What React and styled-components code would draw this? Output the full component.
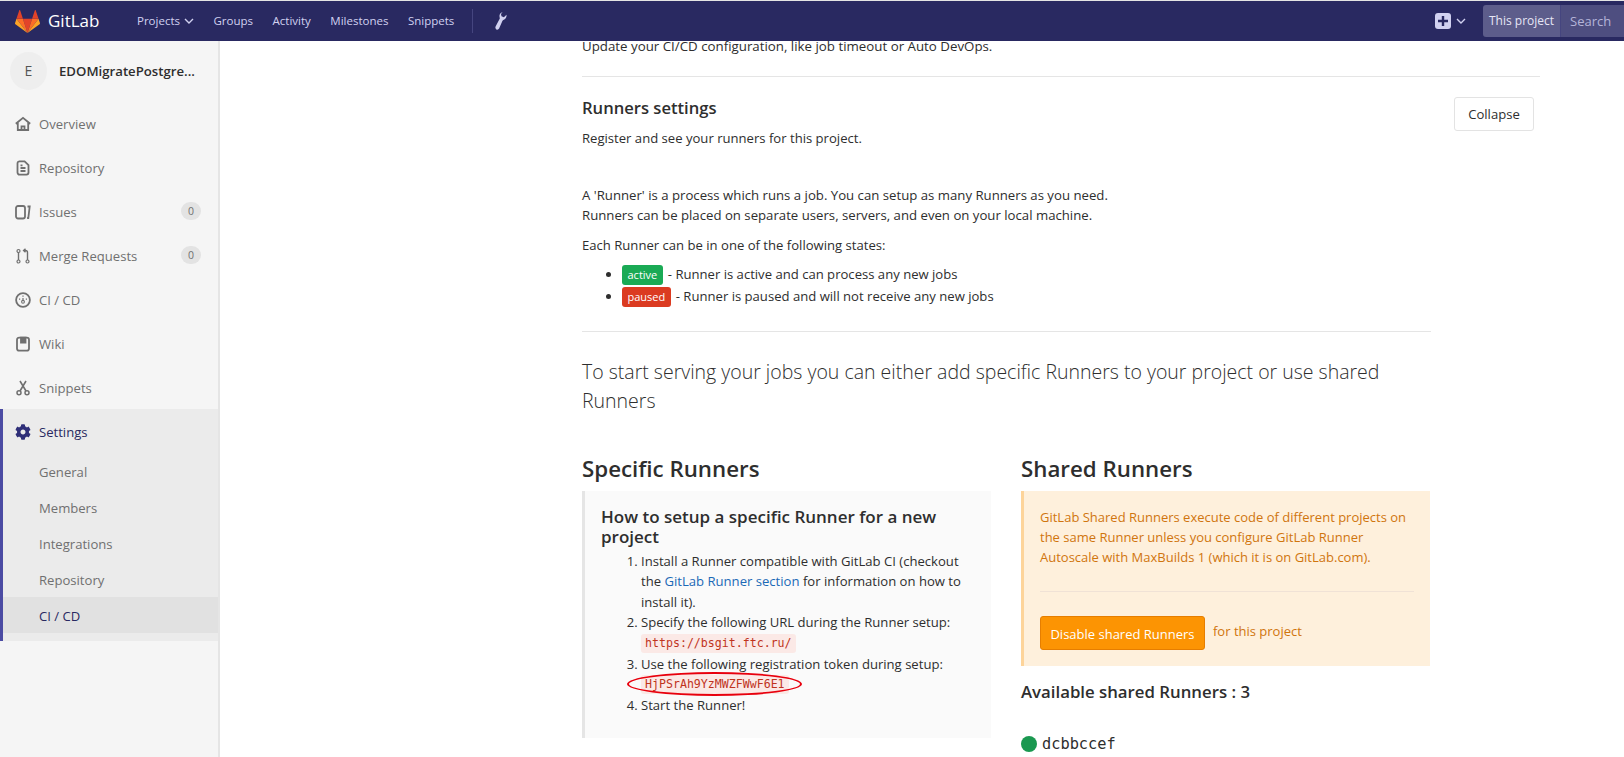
import React from "react";
import styled, { createGlobalStyle } from "styled-components";
import { FaCog } from "react-icons/fa";

const GlobalStyle = createGlobalStyle`
  html, body {
    margin: 0;
    height: 100%;
    overflow: hidden;
    background: #fff;
  }
  body {
    font-family: "Open Sans", "Noto Sans", sans-serif;
    font-size: 13.1px;
    line-height: 20px;
    color: #2e2e2e;
  }
  * { box-sizing: border-box; }
`;

const Page = styled.div`
  height: 757px;
  display: flex;
  flex-direction: column;
  border-top: 1px solid #e4e4e4;
  overflow: hidden;
`;

const TopBar = styled.header`
  height: 40px;
  flex: none;
  background: #292961;
  display: flex;
  align-items: center;
  padding-left: 15px;
  color: #d1d1f0;
  font-size: 11.5px;
  position: relative;
  z-index: 2;
`;

const Brand = styled.div`
  display: flex;
  align-items: center;
  gap: 8px;
  width: 122px;
  color: #fff;
  font-size: 17px;
  svg { flex: none; }
`;

const NavLinks = styled.nav`
  display: flex;
  align-items: center;
  gap: 19.5px;
`;

const NavLink = styled.span`
  display: inline-flex;
  align-items: center;
  gap: 4px;
`;

const NavDivider = styled.span`
  width: 1px;
  height: 24px;
  background: #45457f;
  margin-left: 18px;
`;

const WrenchWrap = styled.span`
  display: inline-flex;
  margin-left: 21px;
  color: #d1d1f0;
`;

const TopRight = styled.div`
  margin-left: auto;
  display: flex;
  align-items: center;
`;

const PlusBox = styled.span`
  width: 16px;
  height: 16px;
  border-radius: 3px;
  background: #d1d1f0;
  display: flex;
  align-items: center;
  justify-content: center;
  margin-right: 5px;
`;

const SearchChip = styled.div`
  height: 32px;
  width: 78px;
  margin-left: 17px;
  background: #5d5d8b;
  border-radius: 3px 0 0 3px;
  color: #e6e6f5;
  font-size: 12px;
  display: flex;
  align-items: center;
  justify-content: center;
  border-right: 1px solid #45457f;
`;

const SearchField = styled.div`
  height: 32px;
  width: 63px;
  background: #4e4e80;
  color: #b4b4d8;
  display: flex;
  align-items: center;
  padding-left: 9px;
  font-size: 13px;
`;

const Body = styled.div`
  flex: 1;
  display: flex;
  min-height: 0;
`;

const Sidebar = styled.aside`
  width: 220px;
  flex: none;
  background: #f5f5f5;
  border-right: 2px solid #e5e5e5;
  color: #707070;
`;

const ProjectHead = styled.div`
  height: 60px;
  display: flex;
  align-items: center;
  padding: 0 0 0 10px;
  gap: 12px;
  color: #2e2e2e;
  font-weight: 600;
  font-size: 13.2px;
`;

const Avatar = styled.div`
  width: 37px;
  height: 38px;
  border-radius: 50%;
  background: #eeeeee;
  color: #555;
  font-size: 14px;
  font-weight: 400;
  display: flex;
  align-items: center;
  justify-content: center;
`;

const MenuItem = styled.div`
  height: 44px;
  display: flex;
  align-items: center;
  padding: 2px 17px 0 15px;
  gap: 8px;
  color: ${(p) => (p.$active ? "#292961" : "#707070")};
  font-weight: ${(p) => (p.$active ? 500 : 400)};
  svg { flex: none; }
`;

const Badge = styled.span`
  margin-left: auto;
  margin-top: -3px;
  width: 20px;
  height: 18px;
  border-radius: 9px;
  background: #e3e3e3;
  color: #707070;
  font-size: 10.5px;
  display: flex;
  align-items: center;
  justify-content: center;
`;

const SettingsGroup = styled.div`
  background: #ebebeb;
  border-left: 3px solid #4b4ba3;
  padding-bottom: 8px;
  ${MenuItem} { padding-left: 12px; }
`;

const SubItem = styled.div`
  height: 36px;
  display: flex;
  align-items: center;
  padding: 2px 0 0 36px;
  background: ${(p) => (p.$active ? "#e1e1e1" : "transparent")};
  color: ${(p) => (p.$active ? "#292961" : "#707070")};
  font-weight: ${(p) => (p.$active ? 500 : 400)};
`;

const Main = styled.main`
  flex: 1;
  min-width: 0;
  overflow: hidden;
  padding-left: 362px;
`;

const Column = styled.div`
  width: 958px;
`;

const ClippedLead = styled.p`
  margin: -5px 0 0;
  padding-bottom: 20px;
  border-bottom: 1px solid #e5e5e5;
  font-size: 13.3px;
`;

const SectionHead = styled.div`
  display: flex;
  justify-content: space-between;
  align-items: flex-start;
  padding: 20px 6px 0 0;
`;

const SectionTitle = styled.h4`
  margin: 1px 0 10px;
  font-size: 16.6px;
  line-height: 20px;
  font-weight: 600;
`;

const Text = styled.p`
  margin: 0;
`;

const CollapseButton = styled.button`
  width: 80px;
  height: 34px;
  background: #fff;
  border: 1px solid #e3e3e3;
  border-radius: 3px;
  color: #2e2e2e;
  font: inherit;
  padding: 0;
`;

const Inner = styled.div`
  width: 849px;
`;

const Intro = styled.p`
  margin: 37px 0 10px;
  font-size: 13.2px;
`;

const StateList = styled.ul`
  margin: 9px 0 0;
  padding-left: 40px;
  li { height: 22px; }
`;

const StateLabel = styled.span`
  display: inline-block;
  height: 20px;
  line-height: 20px;
  padding: 0 5.5px;
  border-radius: 3px;
  color: #fff;
  font-size: 11px;
  margin-right: 5px;
  background: ${(p) => (p.$kind === "active" ? "#1aaa55" : "#db3b21")};
`;

const Divider = styled.hr`
  border: 0;
  border-top: 1px solid #e5e5e5;
  margin: 23px 0 0;
`;

const Lead = styled.h4`
  margin: 25px 0 0;
  font-size: 19.5px;
  line-height: 29px;
  font-weight: 300;
`;

const Columns = styled.div`
  display: grid;
  grid-template-columns: 409px 409px;
  column-gap: 30px;
  margin-top: 39px;
`;

const ColumnTitle = styled.h3`
  margin: 0 0 7px;
  font-size: 22.3px;
  line-height: 30px;
  font-weight: 600;
`;

const HelpPanel = styled.div`
  height: 247px;
  background: #fafafa;
  border-left: 3px solid #e5e5e5;
  padding: 16px 16px;
`;

const HelpTitle = styled.h5`
  margin: 0;
  font-size: 17px;
  line-height: 20px;
  font-weight: 600;
`;

const Steps = styled.ol`
  margin: 4px 0 0;
  padding-left: 40px;
  li { line-height: 20.4px; }
`;

const Link = styled.span`
  color: #1b69b6;
`;

const TokenRow = styled.div`
  height: 21px;
  display: flex;
  align-items: center;
`;

const Code = styled.code`
  position: relative;
  display: inline-block;
  font-family: "DejaVu Sans Mono", monospace;
  font-size: 11.6px;
  line-height: 19px;
  padding: 0 4px;
  border-radius: 3px;
  background: #fbe9e6;
  color: #c0341d;
`;

const RedEllipse = styled.span`
  position: absolute;
  left: -14px;
  top: -3px;
  width: 175px;
  height: 24px;
  border: 2px solid #e8000d;
  border-radius: 50%;
`;

const NoticePanel = styled.div`
  background: #fef0dc;
  border-left: 3px solid #fdd49a;
  padding: 16px 16px 16px;
  color: #d0750e;
  font-size: 13px;
`;

const NoticeRule = styled.hr`
  border: 0;
  border-top: 1px solid #f0e2d6;
  margin: 24px 0 24px;
`;

const NoticeActions = styled.div`
  display: flex;
  align-items: flex-start;
  gap: 8px;
`;

const OrangeButton = styled.button`
  width: 165px;
  height: 34px;
  background: #fc9403;
  border: 1px solid #e67e00;
  border-radius: 3px;
  color: #fff;
  font: inherit;
  padding: 1px 0 0;
`;

const ForProject = styled.span`
  line-height: 30px;
`;

const AvailableTitle = styled.h4`
  margin: 16px 0 0;
  font-size: 16.8px;
  line-height: 20px;
  font-weight: 600;
`;

const RunnerRow = styled.div`
  display: flex;
  align-items: center;
  gap: 5px;
  margin-top: 32px;
  font-family: "DejaVu Sans Mono", monospace;
  font-size: 15.3px;
`;

const StatusDot = styled.span`
  width: 16px;
  height: 16px;
  border-radius: 50%;
  background: #1a9850;
`;

const Chevron = ({ size = 10 }) => (
  <svg width={size} height={size} viewBox="0 0 10 10" fill="none" stroke="currentColor" strokeWidth="1.4">
    <path d="M1 3l4 4 4-4" />
  </svg>
);

const Logo = () => (
  <svg width="25" height="23" viewBox="0 0 36 33">
    <path fill="#e24329" d="M18 33l6.6-20.4H11.4z" />
    <path fill="#fc6d26" d="M18 33L11.4 12.6H2.1z" />
    <path fill="#fca326" d="M2.1 12.6L.1 18.8c-.2.6 0 1.2.5 1.5L18 33z" />
    <path fill="#e24329" d="M2.1 12.6h9.3L7.4.4c-.2-.6-1-.6-1.2 0z" />
    <path fill="#fc6d26" d="M18 33l6.6-20.4h9.3z" />
    <path fill="#fca326" d="M33.9 12.6l2 6.2c.2.6 0 1.2-.5 1.5L18 33z" />
    <path fill="#e24329" d="M33.9 12.6h-9.3l4-12.2c.2-.6 1-.6 1.2 0z" />
  </svg>
);

const Wrench = () => (
  <svg width="13" height="18" viewBox="0 0 13 18" fill="currentColor">
    <path d="M8.6 0.3C6.4 0.7 5.1 2.6 5.5 4.7c.1.7.4 1.2.3 1.9L1.6 14.6c-.5 1-.2 2.3.8 2.9 1 .5 2.2.1 2.7-.9l3.3-7.7c.3-.6.8-.8 1.4-1.1 1.9-.9 3.1-2.8 2.7-5l-2.6 2.4-2.4-.9-.5-2.4z" />
  </svg>
);

const Icon = ({ children }) => (
  <svg width="16" height="16" viewBox="0 0 16 16" fill="none" stroke="#707070" strokeWidth="1.8">
    {children}
  </svg>
);

const HomeIcon = () => (
  <Icon>
    <path d="M.8 7.8L8 1.8l7.2 6M2.8 6.6V14h10.4V6.6M6.5 14v-3.6h3V14" />
  </Icon>
);
const RepoIcon = () => (
  <Icon>
    <path d="M4 1.4h5.6l3.9 3.8v7.4a2 2 0 0 1-2 2h-7a2 2 0 0 1-2-2V3.4a2 2 0 0 1 2-2zM5.5 8h5M5.5 11h5M5.5 5.4h2" />
  </Icon>
);
const IssuesIcon = () => (
  <Icon>
    <rect x="1" y="2" width="9" height="12.5" rx="2" />
    <path d="M12.5 2.5h2.2l-1.4 11.5h-1.2" />
  </Icon>
);
const MergeIcon = () => (
  <Icon>
    <circle cx="3.5" cy="3" r="1.5" strokeWidth="1.2" />
    <circle cx="3.5" cy="13.5" r="1.5" strokeWidth="1.2" />
    <circle cx="12.5" cy="13.5" r="1.5" strokeWidth="1.2" />
    <path d="M3.5 4.5V12M12.5 12V4.5a2 2 0 0 0-2-2H9M10.5 .8L8.6 2.5l1.9 1.7" strokeWidth="1.4" />
  </Icon>
);
const GaugeIcon = () => (
  <Icon>
    <circle cx="8" cy="8" r="6.9" />
    <path d="M8 3.4v1.4M4 7.2h1.2M10.8 7.2H12M8 6v2.6" strokeWidth="1.2" />
    <circle cx="8" cy="9.8" r="1.4" strokeWidth="1.1" />
  </Icon>
);
const WikiIcon = () => (
  <Icon>
    <rect x="2" y="1.6" width="12" height="13" rx="2.2" />
    <path d="M6 1.6h4.5v5H6z" fill="#707070" />
  </Icon>
);
const ScissorsIcon = () => (
  <Icon>
    <circle cx="4" cy="12.8" r="2" strokeWidth="1.5" />
    <circle cx="12" cy="12.8" r="2" strokeWidth="1.5" />
    <path d="M5 11L11 1M11 11L5 1" strokeWidth="1.6" />
  </Icon>
);

const menu = [
  { label: "Overview", icon: <HomeIcon /> },
  { label: "Repository", icon: <RepoIcon /> },
  { label: "Issues", icon: <IssuesIcon />, count: 0 },
  { label: "Merge Requests", icon: <MergeIcon />, count: 0 },
  { label: "CI / CD", icon: <GaugeIcon /> },
  { label: "Wiki", icon: <WikiIcon /> },
  { label: "Snippets", icon: <ScissorsIcon /> },
];

const settingsItems = ["General", "Members", "Integrations", "Repository"];

function App() {
  return (
    <Page>
      <GlobalStyle />
      <TopBar>
        <Brand>
          <Logo />
          GitLab
        </Brand>
        <NavLinks>
          <NavLink>
            Projects <Chevron />
          </NavLink>
          <NavLink>Groups</NavLink>
          <NavLink>Activity</NavLink>
          <NavLink>Milestones</NavLink>
          <NavLink>Snippets</NavLink>
        </NavLinks>
        <NavDivider />
        <WrenchWrap>
          <Wrench />
        </WrenchWrap>
        <TopRight>
          <PlusBox>
            <svg width="10" height="10" viewBox="0 0 10 10" stroke="#292961" strokeWidth="2.4">
              <path d="M5 0v10M0 5h10" />
            </svg>
          </PlusBox>
          <Chevron />
          <SearchChip>This project</SearchChip>
          <SearchField>Search</SearchField>
        </TopRight>
      </TopBar>
      <Body>
        <Sidebar>
          <ProjectHead>
            <Avatar>E</Avatar>
            EDOMigratePostgre...
          </ProjectHead>
          {menu.map((item) => (
            <MenuItem key={item.label}>
              {item.icon}
              {item.label}
              {item.count !== undefined && <Badge>{item.count}</Badge>}
            </MenuItem>
          ))}
          <SettingsGroup>
            <MenuItem $active>
              <FaCog size={16} color="#2f2f78" />
              Settings
            </MenuItem>
            {settingsItems.map((label) => (
              <SubItem key={label}>{label}</SubItem>
            ))}
            <SubItem $active>CI / CD</SubItem>
          </SettingsGroup>
        </Sidebar>
        <Main>
          <Column>
            <ClippedLead>Update your CI/CD configuration, like job timeout or Auto DevOps.</ClippedLead>
            <SectionHead>
              <div>
                <SectionTitle>Runners settings</SectionTitle>
                <Text>Register and see your runners for this project.</Text>
              </div>
              <CollapseButton>Collapse</CollapseButton>
            </SectionHead>
            <Inner>
              <Intro>
                A 'Runner' is a process which runs a job. You can setup as many Runners as you need.
                <br />
                Runners can be placed on separate users, servers, and even on your local machine.
              </Intro>
              <Text>Each Runner can be in one of the following states:</Text>
              <StateList>
                <li>
                  <StateLabel $kind="active">active</StateLabel>- Runner is active and can process any new jobs
                </li>
                <li>
                  <StateLabel $kind="paused">paused</StateLabel>- Runner is paused and will not receive any new jobs
                </li>
              </StateList>
              <Divider />
              <Lead>To start serving your jobs you can either add specific Runners to your project or use shared Runners</Lead>
              <Columns>
                <div>
                  <ColumnTitle>Specific Runners</ColumnTitle>
                  <HelpPanel>
                    <HelpTitle>How to setup a specific Runner for a new project</HelpTitle>
                    <Steps>
                      <li>
                        Install a Runner compatible with GitLab CI (checkout the <Link>GitLab Runner section</Link> for
                        information on how to install it).
                      </li>
                      <li>
                        Specify the following URL during the Runner setup:
                        <TokenRow>
                          <Code>https://bsgit.ftc.ru/</Code>
                        </TokenRow>
                      </li>
                      <li>
                        Use the following registration token during setup:
                        <TokenRow>
                          <Code>
                            HjPSrAh9YzMWZFWwF6E1
                            <RedEllipse />
                          </Code>
                        </TokenRow>
                      </li>
                      <li>Start the Runner!</li>
                    </Steps>
                  </HelpPanel>
                </div>
                <div>
                  <ColumnTitle>Shared Runners</ColumnTitle>
                  <NoticePanel>
                    GitLab Shared Runners execute code of different projects on the same Runner unless you configure
                    GitLab Runner Autoscale with MaxBuilds 1 (which it is on GitLab.com).
                    <NoticeRule />
                    <NoticeActions>
                      <OrangeButton>Disable shared Runners</OrangeButton>
                      <ForProject>for this project</ForProject>
                    </NoticeActions>
                  </NoticePanel>
                  <AvailableTitle>Available shared Runners : 3</AvailableTitle>
                  <RunnerRow>
                    <StatusDot />
                    dcbbccef
                  </RunnerRow>
                </div>
              </Columns>
            </Inner>
          </Column>
        </Main>
      </Body>
    </Page>
  );
}

export default App;
